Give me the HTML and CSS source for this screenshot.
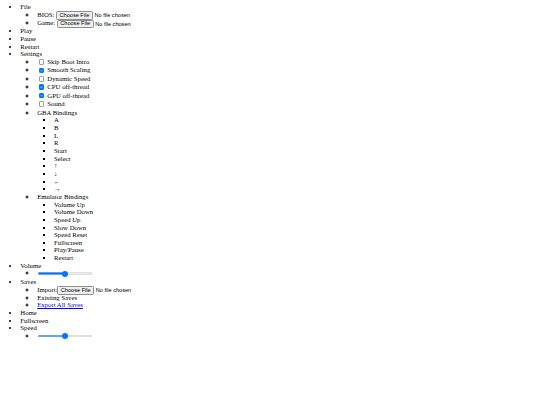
FILE: index.html
```html
<!DOCTYPE html>
<html>
<head>
<meta charset="utf-8">
<title>GBA</title>
<link rel="stylesheet" href="styles.css">
</head>
<body class="body">
<ul class="menu">
  <li>File
    <ul class="sub">
      <li class="filerow">BIOS: <input type="file" class="file"></li>
      <li class="filerow">Game: <input type="file" class="file"></li>
    </ul>
  </li>
  <li>Play</li>
  <li>Pause</li>
  <li>Restart</li>
  <li>Settings
    <ul class="sub">
      <li class="checkrow"><label><input type="checkbox" class="check"> Skip Boot Intro</label></li>
      <li class="checkrow"><label><input type="checkbox" class="check" checked> Smooth Scaling</label></li>
      <li class="checkrow"><label><input type="checkbox" class="check"> Dynamic Speed</label></li>
      <li class="checkrow"><label><input type="checkbox" class="check" checked> CPU off-thread</label></li>
      <li class="checkrow"><label><input type="checkbox" class="check" checked> GPU off-thread</label></li>
      <li class="checkrow"><label><input type="checkbox" class="check"> Sound</label></li>
      <li>GBA Bindings
        <ul class="subsub">
          <li>A</li>
          <li>B</li>
          <li>L</li>
          <li>R</li>
          <li>Start</li>
          <li>Select</li>
          <li>↑</li>
          <li>↓</li>
          <li>←</li>
          <li>→</li>
        </ul>
      </li>
      <li>Emulator Bindings
        <ul class="subsub">
          <li>Volume Up</li>
          <li>Volume Down</li>
          <li>Speed Up</li>
          <li>Slow Down</li>
          <li>Speed Reset</li>
          <li>Fullscreen</li>
          <li>Play/Pause</li>
          <li>Restart</li>
        </ul>
      </li>
    </ul>
  </li>
  <li>Volume
    <ul class="sub">
      <li class="rangerow"><input type="range" class="range" min="0" max="100" value="50"></li>
    </ul>
  </li>
  <li>Saves
    <ul class="sub">
      <li class="filerow">Import:<input type="file" class="file"></li>
      <li>Existing Saves</li>
      <li><a href="#" class="link">Export All Saves</a></li>
    </ul>
  </li>
  <li>Home</li>
  <li>Fullscreen</li>
  <li>Speed
    <ul class="sub">
      <li class="rangerow"><input type="range" class="range" min="0" max="100" value="50"></li>
    </ul>
  </li>
</ul>
</body>
</html>
```
FILE: styles.css
```css
.body {
  margin: 3.4px;
  font-family: "Liberation Serif", "Times New Roman", serif;
  font-size: 6.75px;
  line-height: 7.65px;
  color: #000;
  background: #fff;
}
.menu {
  margin: 0;
  padding-left: 16.9px;
  list-style: disc;
}
.sub {
  margin: 0;
  padding-left: 16.9px;
  list-style: circle;
}
.subsub {
  margin: 0;
  padding-left: 16.9px;
  list-style: square;
}
.filerow {
  height: 8.2px;
  line-height: 8.2px;
}
.checkrow {
  height: 8.45px;
  line-height: 8.45px;
}
.rangerow {
  height: 8.4px;
}
.check {
  -webkit-appearance: none;
  appearance: none;
  box-sizing: border-box;
  width: 5.5px;
  height: 5.5px;
  margin: 0 1.3px 0 1.7px;
  vertical-align: -0.6px;
  border: 0.4px solid #9a9a9a;
  border-radius: 1.1px;
  background: #fff;
}
.check:checked {
  border-color: #0075ff;
  background: #0075ff url("data:image/svg+xml,%3Csvg xmlns='http://www.w3.org/2000/svg' viewBox='0 0 10 10'%3E%3Cpath d='M2 5.2 L4.2 7.3 L8 2.8' fill='none' stroke='white' stroke-width='1.6'/%3E%3C/svg%3E") center / 100% 100% no-repeat;
}
.file {
  font-family: "Liberation Sans", Arial, sans-serif;
  font-size: 5.6px;
  line-height: 6px;
}
.file::file-selector-button {
  font-family: "Liberation Sans", Arial, sans-serif;
  font-size: 5.6px;
  line-height: 5.6px;
  padding: 0.6px 2.4px;
  margin: 0 1.7px 0 0;
  border: 0.5px solid #8f8f8f;
  border-radius: 1.3px;
  background: #efefef;
  color: #000;
}
.range {
  -webkit-appearance: none;
  appearance: none;
  width: 54.4px;
  height: 6.75px;
  margin: 0 0.8px;
  padding: 0;
  vertical-align: -1.6px;
  background: transparent;
}
.range::-webkit-slider-runnable-track {
  height: 2.4px;
  border-radius: 1.2px;
  background: linear-gradient(to right, #0075ff 0, #0075ff 50%, #efefef 50%, #efefef 100%);
  box-shadow: inset 0 0 0 0.4px #cfcfcf;
}
.range::-webkit-slider-thumb {
  -webkit-appearance: none;
  appearance: none;
  width: 6px;
  height: 6px;
  margin-top: -1.8px;
  border-radius: 50%;
  background: #0075ff;
  border: none;
}
.link {
  color: #0000ee;
}
```
